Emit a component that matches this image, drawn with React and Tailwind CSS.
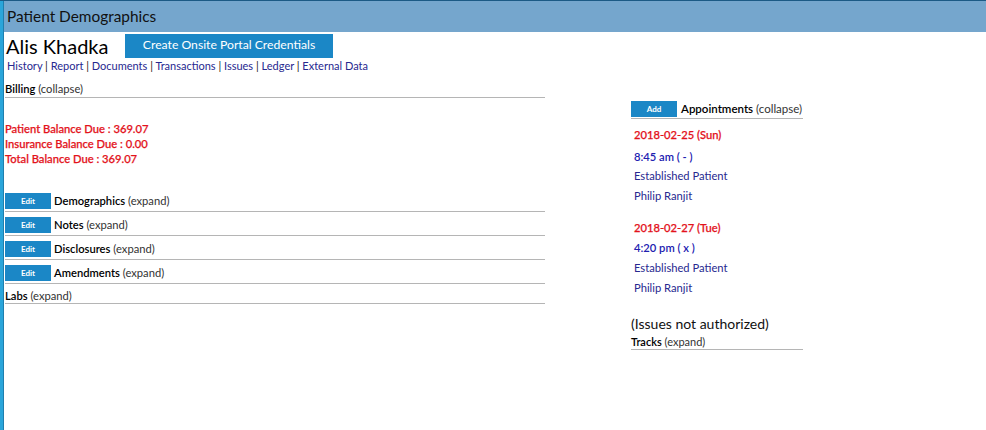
export default function App() {
  const ff = "font-['Lato',sans-serif]";
  const editRows = ["Demographics", "Notes", "Disclosures", "Amendments"];
  return (
    <div className={`w-[986px] h-[430px] bg-white overflow-hidden ${ff} text-black`}>
      <div className="h-px bg-[#1c5a85]" />
      <div className="flex h-[429px]">
        <div className="w-[3px] bg-[#2aa5da]" />
        <div className="w-px bg-[#1f7fae]" />
        <div className="flex-1 flex flex-col">
          <div className="h-[31px] bg-[#75a6cd] pl-[3px] flex items-center text-[15.4px] text-[#111]">
            Patient Demographics
          </div>
          <div className="flex">
            {/* left column */}
            <div className="ml-px w-[540px] flex flex-col">
              <div className="h-[27px] flex items-center">
                <span className="text-[20px] leading-none ml-[1px] w-[119px] shrink-0">Alis Khadka</span>
                <button className="h-[24px] w-[208px] shrink-0 bg-[#1b87c6] text-white text-[12.2px] flex items-center justify-center">
                  Create Onsite Portal Credentials
                </button>
              </div>
              <div className="h-[14px] leading-[14px] text-[11px] ml-[2px] text-[#27288f]">
                {["History", "Report", "Documents", "Transactions", "Issues", "Ledger", "External Data"].map((l, i, a) => (
                  <span key={l}>
                    {l}
                    {i < a.length - 1 && <span className="text-[#222]"> | </span>}
                  </span>
                ))}
              </div>
              <div className="mt-[9px] h-[16px] leading-[14px] text-[11.2px] border-b border-[#b5b5b5]">
                <span className="font-semibold">Billing</span> <span className="text-[#333]">(collapse)</span>
              </div>
              <div className="mt-[23px] flex flex-col text-[11.2px] leading-[15px] text-[#e3121b] font-medium [-webkit-text-stroke:0.25px_#e3121b]">
                <div>Patient Balance Due : 369.07</div>
                <div>Insurance Balance Due : 0.00</div>
                <div>Total Balance Due : 369.07</div>
              </div>
              <div className="mt-[22px] flex flex-col">
                {editRows.map((r) => (
                  <div key={r} className="h-[24px] pt-[5px] border-b border-[#b5b5b5] flex items-start">
                    <div className="w-[46px] h-[16px] shrink-0 bg-[#1b87c6] text-white text-[8px] font-bold flex items-center justify-center">
                      Edit
                    </div>
                    <div className="ml-[3px] h-[16px] flex items-center text-[11.2px]">
                      <span className="font-semibold">{r}</span>&nbsp;<span className="text-[#333]">(expand)</span>
                    </div>
                  </div>
                ))}
                <div className="h-[20px] pt-[5px] border-b border-[#b5b5b5] text-[11.2px] leading-[14px]">
                  <span className="font-semibold">Labs</span> <span className="text-[#333]">(expand)</span>
                </div>
              </div>
            </div>
            {/* right column */}
            <div className="ml-[86px] w-[172px] flex flex-col">
              <div className="mt-[69px] h-[18px] border-b border-[#b5b5b5] flex items-start">
                <div className="w-[46px] h-[16px] shrink-0 bg-[#1b87c6] text-white text-[8px] font-bold flex items-center justify-center">
                  Add
                </div>
                <div className="ml-[4px] h-[16px] flex items-center text-[11.5px] whitespace-nowrap">
                  <span className="font-semibold">Appointments</span>&nbsp;<span className="text-[#333]">(collapse)</span>
                </div>
              </div>
              <div className="mt-[9px] ml-[3px] flex flex-col text-[11.2px] leading-[14px]">
                <div className="h-[22px] text-[#e3121b] font-medium [-webkit-text-stroke:0.25px_#e3121b]">2018-02-25 (Sun)</div>
                <div className="h-[19px] text-[#2020b0] font-semibold">8:45 am ( - )</div>
                <div className="h-[20px] text-[#27288f]">Established Patient</div>
                <div className="h-[32px] text-[#27288f]">Philip Ranjit</div>
                <div className="h-[20px] text-[#e3121b] font-medium [-webkit-text-stroke:0.25px_#e3121b]">2018-02-27 (Tue)</div>
                <div className="h-[20px] text-[#2020b0] font-semibold">4:20 pm ( x )</div>
                <div className="h-[20px] text-[#27288f]">Established Patient</div>
                <div className="h-[20px] text-[#27288f]">Philip Ranjit</div>
              </div>
              <div className="mt-[15px] text-[14px] leading-[16px] text-[#111]">(Issues not authorized)</div>
              <div className="mt-[3px] h-[15px] leading-[13px] text-[11px] border-b border-[#b5b5b5]">
                <span className="font-semibold">Tracks</span> <span className="text-[#333]">(expand)</span>
              </div>
            </div>
          </div>
        </div>
      </div>
    </div>
  );
}
